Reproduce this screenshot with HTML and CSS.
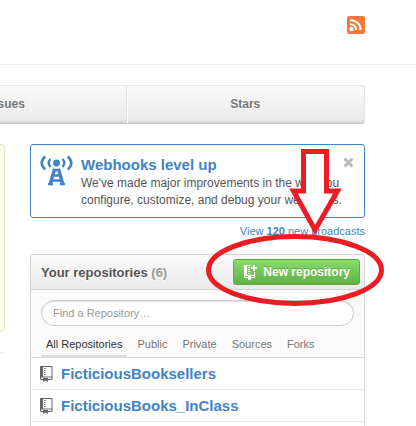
FILE: index.html
```html
<!DOCTYPE html>
<html lang="en">
<head>
<meta charset="utf-8">
<title>Dashboard</title>
<link rel="stylesheet" href="styles.css">
</head>
<body>
<header class="topbar">
  <a class="feed" href="#" aria-label="News feed">
    <svg width="18" height="18" viewBox="0 0 18 18">
      <rect width="18" height="18" rx="2" fill="#f6783a"/>
      <circle cx="4.500" cy="13" r="2.200" fill="#fff"/>
      <path d="M3 8.200a6 6 0 0 1 6.300 5.900M3 4.200a10 10 0 0 1 10.700 9.900" fill="none" stroke="#fff" stroke-width="2"/>
    </svg>
  </a>
</header>
<nav class="tabs">
  <a class="tab" href="#">Issues</a>
  <a class="tab" href="#">Stars</a>
</nav>
<main class="columns">
  <div class="news">
    <div class="tip"></div>
  </div>
  <aside class="sidebar">
    <section class="notice">
      <svg class="notice-icon" width="34" height="31" viewBox="0 0 34 31">
        <circle cx="17.500" cy="8" r="3.400" fill="#4183c4"/>
        <g fill="none" stroke="#4183c4">
          <path d="M11.500 4q-3.600 4 0 8M23.500 4q3.600 4 0 8" stroke-width="2.400"/>
          <path d="M6.200 1.500q-7 6.500 0 13M28.800 1.500q7 6.500 0 13" stroke-width="2.600"/>
          <path d="M15.500 14L11 30M19.500 14L24 30" stroke-width="3.400"/>
          <path d="M14 15h7M13 20.500h9M12 25.500h11M9 29h5M21 29h5" stroke-width="2.400"/>
        </g>
      </svg>
      <div class="notice-body">
        <h2 class="notice-title"><a href="#">Webhooks level up</a></h2>
        <p class="notice-text">We've made major improvements in the way you configure, customize, and debug your webhooks.</p>
      </div>
      <button class="dismiss" type="button" aria-label="Dismiss">
        <svg width="11" height="11" viewBox="0 0 11 11"><path d="M1.500 1.500l8 8M9.500 1.500l-8 8" stroke="#bbb" stroke-width="3"/></svg>
      </button>
    </section>
    <a class="broadcasts" href="#">View <b>120</b> new broadcasts</a>
    <section class="repos">
      <div class="repos-head">
        <h2 class="repos-title">Your repositories <span class="count">(6)</span></h2>
        <button class="new-repo" type="button">
          <svg width="15" height="17" viewBox="0 0 15 17">
            <path d="M1 1h7v1H4v9h7V8h1v6H8v2.500l-1.500-1.300L5 16.500V14H1zM2 12v1h3v-1zM8 12v1h3v-1z" fill="#fff" fill-rule="evenodd"/>
            <path d="M5 3.500h2M5 5.500h2M5 7.500h2M5 9.500h2" stroke="#fff"/>
            <path d="M11 1v6M8 4h6" stroke="#fff" stroke-width="2"/>
          </svg>
          New repository
        </button>
      </div>
      <div class="filter">
        <input class="search" type="search" placeholder="Find a Repository…" aria-label="Find a Repository">
        <div class="filter-tabs">
          <a class="filter-tab current" href="#">All Repositories</a>
          <a class="filter-tab" href="#">Public</a>
          <a class="filter-tab" href="#">Private</a>
          <a class="filter-tab" href="#">Sources</a>
          <a class="filter-tab" href="#">Forks</a>
        </div>
      </div>
      <ul class="repo-list">
        <li class="repo">
          <svg class="book" width="13" height="16" viewBox="0 0 13 16">
            <path d="M.5.500h11.500v13H.5zM.5 11h11.500" fill="none" stroke="#666"/>
            <path d="M0 0h3v11H0zM3 12h5v4l-2.500-1.500L3 16z" fill="#666"/>
            <path d="M4 2.500h1.500M4 4.500h1.500M4 6.500h1.500M4 8.500h1.500" stroke="#666"/>
          </svg>
          <a href="#">FicticiousBooksellers</a>
        </li>
        <li class="repo">
          <svg class="book" width="13" height="16" viewBox="0 0 13 16">
            <path d="M.5.500h11.500v13H.5zM.5 11h11.500" fill="none" stroke="#666"/>
            <path d="M0 0h3v11H0zM3 12h5v4l-2.500-1.500L3 16z" fill="#666"/>
            <path d="M4 2.500h1.500M4 4.500h1.500M4 6.500h1.500M4 8.500h1.500" stroke="#666"/>
          </svg>
          <a href="#">FicticiousBooks_InClass</a>
        </li>
      </ul>
    </section>
    <svg class="callout" width="182" height="162" viewBox="204 146 182 162" aria-hidden="true">
      <path d="M303.500 151.500H326.500V191H337.500L315 230 293.500 191H303.500Z" fill="#fff" stroke="#ed1c24" stroke-width="5"/>
      <ellipse cx="295" cy="270" rx="86.500" ry="33.500" fill="none" stroke="#ed1c24" stroke-width="5"/>
    </svg>
  </aside>
</main>
</body>
</html>
```

FILE: styles.css
```css
* {
  box-sizing: border-box;
}

body {
  margin: 0;
  overflow: hidden;
  background: #fff;
  color: #555;
  font-family: "Liberation Sans", Arial, sans-serif;
  font-size: 12px;
}

a {
  color: #4183c4;
  text-decoration: none;
}

h2,
p,
ul {
  margin: 0;
  padding: 0;
}

button {
  font-family: inherit;
  cursor: pointer;
}

svg {
  display: block;
  flex: none;
}

.topbar {
  display: flex;
  justify-content: flex-end;
  padding: 16px 51px 30px 0;
  border-bottom: 1px solid #eee;
}

.tabs {
  display: grid;
  grid-template-columns: 1fr 1fr;
  margin: 20px 51px 20px -114px;
  border: 1px solid #e6e6e6;
  border-bottom: 1px solid #c5c5c5;
  border-radius: 3px;
  background: linear-gradient(#fafafa, #e8e8e8);
  box-shadow: inset 0 -2px 0 #dadada;
}

.tab {
  padding: 11px 0;
  color: #777;
  font-weight: bold;
  line-height: 15px;
  text-align: center;
  text-shadow: 0 1px 0 #fff;
}

.tab + .tab {
  border-left: 1px solid #ddd;
  box-shadow: inset 1px 0 0 #fff;
}

.columns {
  display: grid;
  grid-template-columns: 5px 1fr;
  align-items: start;
  gap: 25px;
  padding-right: 51px;
}

.news {
  height: 209px;
  border-bottom: 1px solid #eee;
}

.tip {
  height: 188px;
  border: 1px solid #e4e4c6;
  border-left: 0;
  border-radius: 0 4px 4px 0;
  background: #ffffec;
}

.sidebar {
  position: relative;
  min-width: 0;
}

.notice {
  display: flex;
  gap: 8px;
  padding: 10px 10px 8px;
  border: 1px solid #4183c4;
  border-radius: 3px;
}

.notice-icon {
  margin-left: -2px;
}

.notice-body {
  flex: 1;
  min-width: 0;
}

.notice-title {
  font-size: 15px;
  line-height: 20px;
}

.notice-text {
  margin-right: -20px;
  line-height: 17px;
}

.dismiss {
  align-self: flex-start;
  padding: 2px 0;
  border: 0;
  background: none;
}

.broadcasts {
  display: block;
  padding: 5px 0 15px;
  font-size: 11px;
  line-height: 16px;
  text-align: right;
}

.repos {
  border: 1px solid #d5d5d5;
  border-bottom: 0;
  border-radius: 3px 3px 0 0;
}

.repos-head {
  display: flex;
  align-items: center;
  justify-content: space-between;
  padding: 4px 4px 4px 10px;
  border-bottom: 1px solid #d5d5d5;
  background: linear-gradient(#fafafa, #e9e9e9);
}

.repos-title {
  font-size: 13px;
  text-shadow: 0 1px 0 #fff;
}

.count {
  color: #999;
}

.new-repo {
  display: flex;
  align-items: center;
  gap: 5px;
  height: 26px;
  padding: 0 9px;
  border: 1px solid #5ca941;
  border-radius: 3px;
  background: linear-gradient(#8add6d, #60b044);
  color: #fff;
  font-size: 12px;
  font-weight: bold;
  text-shadow: 0 -1px 0 rgba(0, 0, 0, 0.25);
}

.filter {
  padding: 10px 10px 0;
  border-bottom: 1px solid #ddd;
  background: #fafafa;
}

.search {
  display: block;
  width: 100%;
  height: 26px;
  padding: 0 11px;
  border: 1px solid #ccc;
  border-radius: 13px;
  background: #fff;
  box-shadow: inset 0 1px 1px #ddd;
  font-family: inherit;
  font-size: 11px;
}

.search::placeholder {
  color: #999;
}

.filter-tabs {
  display: flex;
  gap: 5px;
  padding-top: 11px;
}

.filter-tab {
  padding: 0 5px 3px;
  border-bottom: 2px solid transparent;
  color: #777;
  font-size: 11px;
  line-height: 15px;
}

.filter-tab.current {
  border-color: #ddd;
  color: #333;
}

.repo-list {
  padding-bottom: 4px;
  list-style: none;
}

.repo {
  display: flex;
  align-items: center;
  gap: 8px;
  height: 32px;
  padding-left: 9px;
  border-bottom: 1px solid #e5e5e5;
  font-size: 15px;
  font-weight: bold;
}

.callout {
  position: absolute;
  top: 2px;
  right: -21px;
  pointer-events: none;
}
```
